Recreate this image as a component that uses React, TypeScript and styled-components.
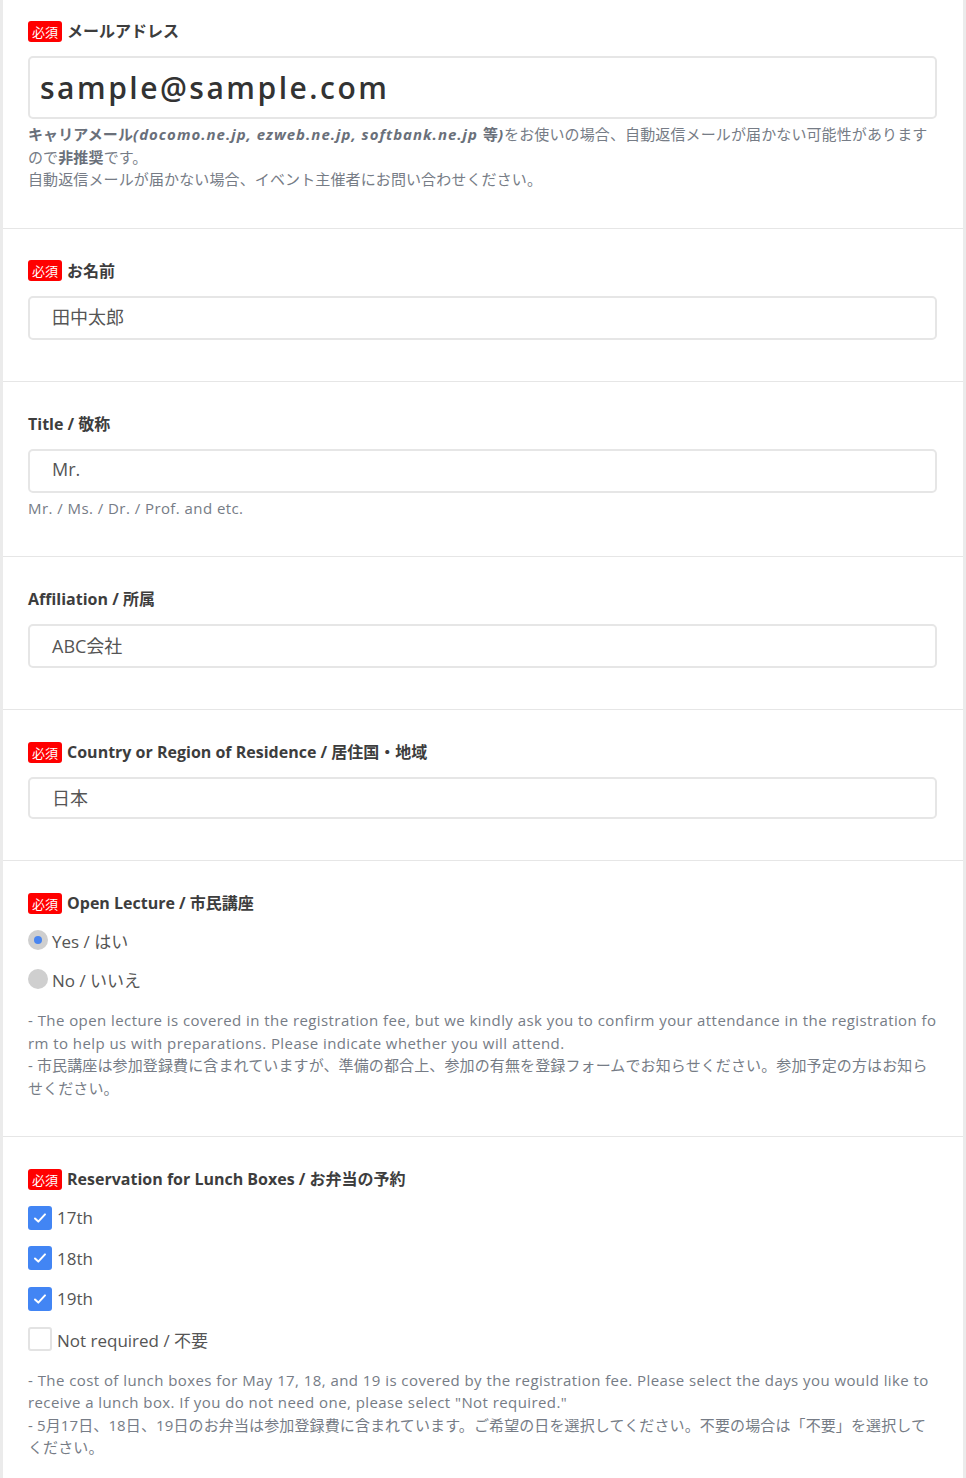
import React from "react";
import styled, { createGlobalStyle } from "styled-components";

const GlobalStyle = createGlobalStyle`
  html, body {
    margin: 0;
    padding: 0;
    background: #ebebeb;
  }
  body {
    font-family: "Open Sans", "Noto Sans CJK JP", sans-serif;
    color: #444;
  }
  * { box-sizing: border-box; }
`;

const Card = styled.div`
  width: 960px;
  margin: 0 3px;
  background: #fff;
`;

const Section = styled.section<{ $first?: boolean }>`
  padding: ${(p) => (p.$first ? "20px" : "31px")} 26px 37px 25px;
  border-bottom: 1px solid #e6e6e6;
`;

const LabelRow = styled.div`
  display: flex;
  align-items: center;
  height: 22px;
  margin-bottom: 14px;
`;

const Badge = styled.span`
  display: inline-flex;
  align-items: center;
  justify-content: center;
  height: 21px;
  padding: 0 4px;
  margin-right: 5px;
  background: #ff0000;
  color: #fff;
  border-radius: 3px;
  font-size: 13px;
  line-height: 1;
  font-family: "Noto Sans CJK JP", sans-serif;
`;

const LabelText = styled.span`
  font-size: 16px;
  font-weight: 700;
  color: #3d3d3d;
  line-height: 22px;
`;

const Input = styled.div<{ $big?: boolean; $h?: number }>`
  display: flex;
  align-items: center;
  height: ${(p) => (p.$big ? 63 : p.$h ?? 44)}px;
  padding: 0 ${(p) => (p.$big ? "10px" : "22px")};
  padding-bottom: ${(p) => (p.$big ? 1 : 3)}px;
  border: 2px solid #e6e6e6;
  border-radius: 5px;
  font-size: ${(p) => (p.$big ? "30px" : "18px")};
  font-weight: ${(p) => (p.$big ? 600 : 400)};
  letter-spacing: ${(p) => (p.$big ? "2.5px" : "0")};
  color: ${(p) => (p.$big ? "#333" : "#555")};
  margin-bottom: 4px;
`;

const Hint = styled.div<{ $gap?: number }>`
  margin-top: ${(p) => p.$gap ?? 0}px;
  font-size: 15px;
  line-height: 22.5px;
  color: #767c86;
  letter-spacing: 0.12px;
  word-break: break-all;
`;

const Latin = styled.span`
  letter-spacing: 0.41px;
  word-spacing: 0.1px;
`;

const Strong = styled.b`
  font-weight: 700;
  color: #6a707a;
`;

const Ital = styled.i`
  font-style: italic;
  letter-spacing: 1px;
`;

const Upright = styled.span`
  font-style: normal;
  letter-spacing: 0.12px;
`;

const OptionList = styled.div<{ $gap: number; $top: number }>`
  display: flex;
  flex-direction: column;
  gap: ${(p) => p.$gap}px;
  margin-top: ${(p) => p.$top}px;
`;

const OptionRow = styled.label<{ $h: number }>`
  display: flex;
  align-items: center;
  height: ${(p) => p.$h}px;
  font-size: 17px;
  color: #555;
`;

const RadioCircle = styled.span<{ $on?: boolean }>`
  width: 20px;
  height: 20px;
  border-radius: 50%;
  background: #cfcfcf;
  margin-right: 4px;
  display: inline-flex;
  align-items: center;
  justify-content: center;
  flex: none;
  &::after {
    content: "";
    display: ${(p) => (p.$on ? "block" : "none")};
    width: 8px;
    height: 8px;
    border-radius: 50%;
    background: #4a86f0;
  }
`;

const CheckBox = styled.span<{ $on?: boolean }>`
  width: 24px;
  height: 24px;
  border-radius: 3px;
  margin-right: 5px;
  flex: none;
  display: inline-flex;
  align-items: center;
  justify-content: center;
  background: ${(p) => (p.$on ? "#4285f4" : "#fff")};
  border: ${(p) => (p.$on ? "none" : "2px solid #e3e3e3")};
`;

const Check = () => (
  <svg width="14" height="12" viewBox="0 0 14 12" fill="none">
    <path d="M2 6.5 L5.3 9.6 L12 2.4" stroke="#fff" strokeWidth="2" strokeLinecap="round" strokeLinejoin="round" />
  </svg>
);

const Label = ({ req, children }: { req?: boolean; children: React.ReactNode }) => (
  <LabelRow>
    {req && <Badge>必須</Badge>}
    <LabelText>{children}</LabelText>
  </LabelRow>
);

export default function App() {
  return (
    <>
      <GlobalStyle />
      <Card>
        <Section $first>
          <Label req>メールアドレス</Label>
          <Input $big>sample@sample.com</Input>
          <Hint $gap={1}>
            <Strong>
              キャリアメール
              <Ital>
                (docomo.ne.jp, ezweb.ne.jp, softbank.ne.jp <Upright>等</Upright>)
              </Ital>
            </Strong>
            をお使いの場合、自動返信メールが届かない可能性がありますので<Strong>非推奨</Strong>です。
            <br />
            自動返信メールが届かない場合、イベント主催者にお問い合わせください。
          </Hint>
        </Section>

        <Section>
          <Label req>お名前</Label>
          <Input>田中太郎</Input>
        </Section>

        <Section>
          <Label>Title / 敬称</Label>
          <Input>Mr.</Input>
          <Hint>
            <Latin>Mr. / Ms. / Dr. / Prof. and etc.</Latin>
          </Hint>
        </Section>

        <Section>
          <Label>Affiliation / 所属</Label>
          <Input>ABC会社</Input>
        </Section>

        <Section>
          <Label req>Country or Region of Residence / 居住国・地域</Label>
          <Input $h={42}>日本</Input>
        </Section>

        <Section>
          <Label req>Open Lecture / 市民講座</Label>
          <OptionList $gap={13} $top={-1}>
            <OptionRow $h={26}>
              <RadioCircle $on />
              Yes / はい
            </OptionRow>
            <OptionRow $h={26}>
              <RadioCircle />
              No / いいえ
            </OptionRow>
          </OptionList>
          <Hint $gap={17}>
            <Latin>
              - The open lecture is covered in the registration fee, but we kindly ask you to confirm your attendance in the registration form to help us with preparations. Please indicate whether you will attend.
            </Latin>
            <br />
            - 市民講座は参加登録費に含まれていますが、準備の都合上、参加の有無を登録フォームでお知らせください。参加予定の方はお知らせください。
          </Hint>
        </Section>

        <Section>
          <Label req>Reservation for Lunch Boxes / お弁当の予約</Label>
          <OptionList $gap={13.5} $top={2}>
            {["17th", "18th", "19th"].map((d) => (
              <OptionRow key={d} $h={27}>
                <CheckBox $on>
                  <Check />
                </CheckBox>
                {d}
              </OptionRow>
            ))}
            <OptionRow $h={27}>
              <CheckBox />
              Not required / 不要
            </OptionRow>
          </OptionList>
          <Hint $gap={16}>
            <Latin>
              - The cost of lunch boxes for May 17, 18, and 19 is covered by the registration fee. Please select the days you would like to receive a lunch box. If you do not need one, please select "Not required."
            </Latin>
            <br />
            - 5月17日、18日、19日のお弁当は参加登録費に含まれています。ご希望の日を選択してください。不要の場合は「不要」を選択してください。
          </Hint>
        </Section>
      </Card>
    </>
  );
}
